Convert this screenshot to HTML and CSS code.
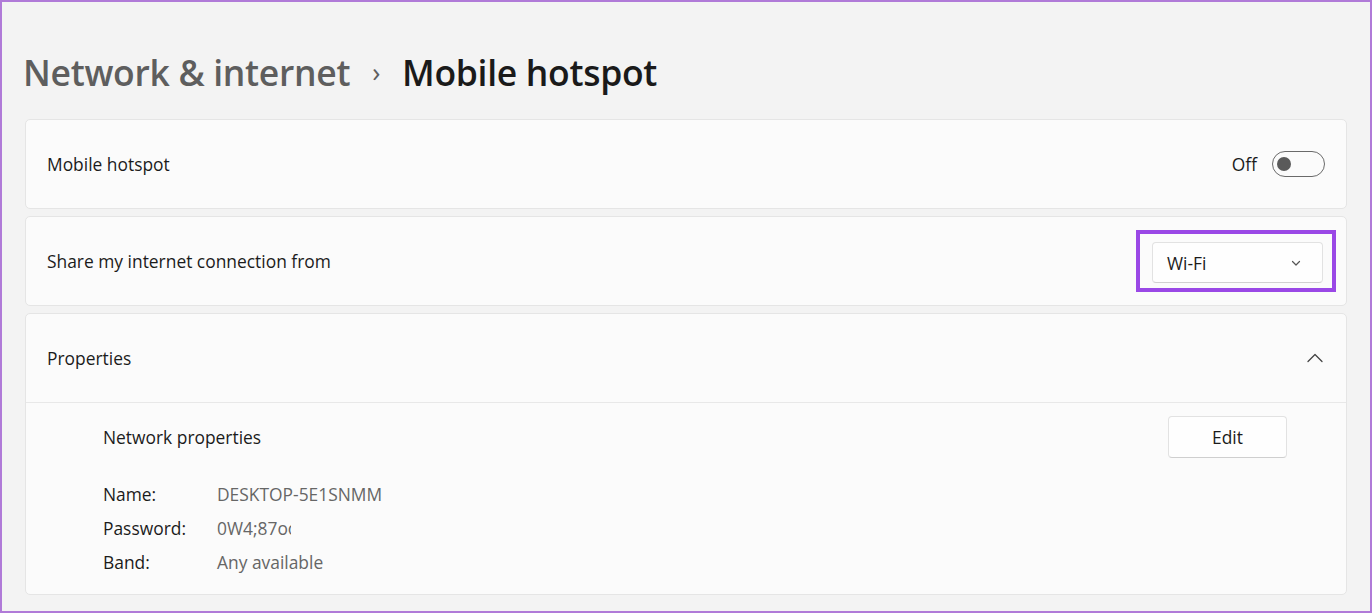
FILE: index.html
```
<!doctype html>
<html>
<head>
	<meta charset="utf-8" />
	<title>Mobile hotspot</title>
	<link rel="stylesheet" href="styles.css">
</head>
<body>
<div class="frame">
	<h1 class="crumbs">
		<span class="parent">Network &amp; internet</span>
		<span class="sep">&#8250;</span>
		<span class="current">Mobile hotspot</span>
	</h1>

	<div class="card row">
		<span class="label">Mobile hotspot</span>
		<div class="right">
			<span class="state">Off</span>
			<span class="toggle"><span class="knob"></span></span>
		</div>
	</div>

	<div class="card row">
		<span class="label">Share my internet connection from</span>
		<div class="highlight">
			<div class="select">
				<span>Wi-Fi</span>
				<svg width="12" height="12" viewBox="0 0 12 12"><path d="M2.5 4.5 L6 8 L9.5 4.5" fill="none" stroke="#555" stroke-width="1.2" stroke-linecap="round" stroke-linejoin="round"/></svg>
			</div>
		</div>
	</div>

	<div class="card props">
		<div class="row head">
			<span class="label">Properties</span>
			<svg class="up" width="18" height="12" viewBox="0 0 18 12"><path d="M2 9.5 L9 2.5 L16 9.5" fill="none" stroke="#444" stroke-width="1.3" stroke-linecap="round" stroke-linejoin="round"/></svg>
		</div>
		<div class="body">
			<div class="subhead">
				<span class="label">Network properties</span>
				<button class="edit">Edit</button>
			</div>
			<div class="details">
				<span class="key">Name:</span><span class="val">DESKTOP-5E1SNMM</span>
				<span class="key">Password:</span><span class="val"><span class="clip">0W4;87oo</span></span>
				<span class="key">Band:</span><span class="val">Any available</span>
			</div>
		</div>
	</div>
</div>
</body>
</html>
```
FILE: styles.css
```
*
{
	box-sizing: border-box;
}

body
{
	margin: 0;
	background: #f3f3f3;
	font-family: "Open Sans", "Noto Sans", sans-serif;
	color: #1b1b1b;
}

.frame
{
	height: 613px;
	border: 2px solid #b07ad8;
	padding: 0 23px 0 23px;
	overflow: hidden;
}

.crumbs
{
	margin: 0 0 0 -2px;
	padding: 46px 0 0 0;
	height: 117px;
	font-size: 35.5px;
	font-weight: 600;
	display: flex;
	align-items: baseline;
	letter-spacing: -0.3px;
}

.crumbs .parent
{
	color: #5e5e5e;
}

.crumbs .sep
{
	color: #5e5e5e;
	font-size: 27px;
	font-weight: 400;
	margin: 0 22px 0 22px;
	position: relative;
	top: -4px;
}

.crumbs .current
{
	color: #1a1a1a;
}

.card
{
	background: #fbfbfb;
	border: 1px solid #e5e5e5;
	border-radius: 5px;
	margin-bottom: 7px;
}

.row
{
	display: flex;
	align-items: center;
	justify-content: space-between;
	padding: 0 21px 0 21px;
}

.card.row
{
	height: 90px;
}

.label
{
	font-size: 17.4px;
}

.right
{
	display: flex;
	align-items: center;
}

.state
{
	font-size: 17.4px;
	margin-right: 15px;
}

.toggle
{
	width: 53px;
	height: 26px;
	border: 1px solid #6a6a6a;
	border-radius: 13px;
	display: flex;
	align-items: center;
	padding-left: 4px;
}

.knob
{
	width: 14px;
	height: 14px;
	border-radius: 50%;
	background: #5a5a5a;
}

.highlight
{
	border: 4px solid #9a48e6;
	padding: 8px 9px 5px 12px;
	margin-right: -11px;
}

.select
{
	width: 171px;
	height: 41px;
	background: #fefefe;
	border: 1px solid #e2e2e2;
	border-bottom-color: #d0d0d0;
	border-radius: 4px;
	display: flex;
	align-items: center;
	justify-content: space-between;
	padding: 0 20px 0 14px;
	font-size: 17.4px;
}

.props .head
{
	height: 89px;
	border-bottom: 1px solid #e8e8e8;
}

.up
{
	margin-right: 1px;
}

.body
{
	padding: 12px 59px 20px 77px;
}

.subhead
{
	display: flex;
	align-items: center;
	justify-content: space-between;
	height: 43px;
}

.edit
{
	width: 119px;
	height: 42px;
	background: #fefefe;
	border: 1px solid #e2e2e2;
	border-bottom-color: #cfcfcf;
	border-radius: 4px;
	font-family: inherit;
	font-size: 17.4px;
	color: #1b1b1b;
}

.details
{
	display: grid;
	grid-template-columns: 114px auto;
	row-gap: 11px;
	margin-top: 25px;
	font-size: 17.4px;
	line-height: 23px;
}

.val
{
	color: #666;
}

.clip
{
	display: inline-block;
	width: 74px;
	overflow: hidden;
	white-space: nowrap;
	vertical-align: top;
}
```
